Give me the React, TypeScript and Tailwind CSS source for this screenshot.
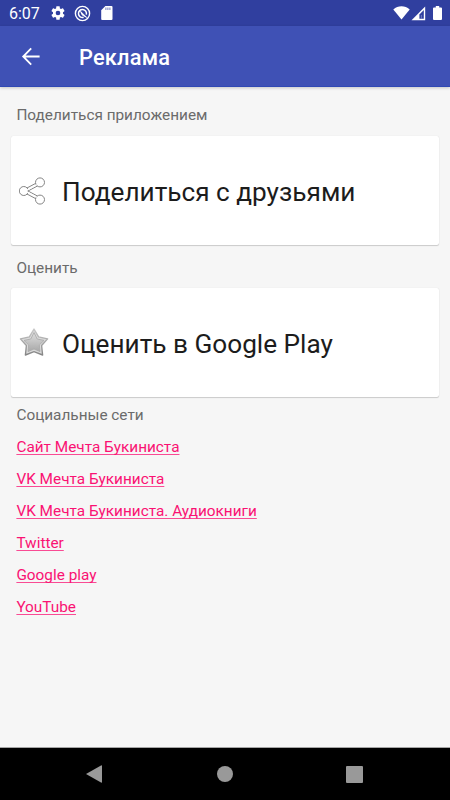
import React from "react";

const links = [
  "Сайт Мечта Букиниста",
  "VK Мечта Букиниста",
  "VK Мечта Букиниста. Аудиокниги",
  "Twitter",
  "Google play",
  "YouTube",
];

function StatusBar() {
  return (
    <div className="flex h-[26px] shrink-0 items-center justify-between bg-[#303f9f] pr-[8px] pl-[9px] text-white">
      <div className="flex items-center">
        <span className="w-[41px] pt-[1px] text-[16px] leading-[26px] whitespace-nowrap">6:07</span>
        <svg className="size-[16px]" viewBox="0 0 24 24" fill="currentColor">
          <path d="M19.43 12.98c.04-.32.07-.64.07-.98s-.03-.66-.07-.98l2.11-1.65c.19-.15.24-.42.12-.64l-2-3.46c-.12-.22-.39-.3-.61-.22l-2.49 1c-.52-.4-1.08-.73-1.69-.98l-.38-2.65A.488.488 0 0 0 14 2h-4c-.25 0-.46.18-.49.42l-.38 2.65c-.61.25-1.17.59-1.69.98l-2.49-1c-.23-.09-.49 0-.61.22l-2 3.46c-.13.22-.07.49.12.64l2.11 1.65c-.04.32-.07.65-.07.98s.03.66.07.98l-2.11 1.65c-.19.15-.24.42-.12.64l2 3.46c.12.22.39.3.61.22l2.49-1c.52.4 1.08.73 1.69.98l.38 2.65c.03.24.24.42.49.42h4c.25 0 .46-.18.49-.42l.38-2.65c.61-.25 1.17-.59 1.69-.98l2.49 1c.23.09.49 0 .61-.22l2-3.46c.12-.22.07-.49-.12-.64l-2.11-1.65zM12 15.5a3.5 3.5 0 1 1 0-7 3.5 3.5 0 0 1 0 7z" />
        </svg>
        <svg className="ml-[8px] size-[17px]" viewBox="0 0 17 17" fill="none" stroke="currentColor">
          <circle cx="8.5" cy="8.5" r="7.1" strokeWidth="1.4" />
          <path d="M9.6 12.3A4 4 0 1 1 12.3 9.6" strokeWidth="1.5" />
          <path d="M6.6 6.4 12.6 12.4 8 9.8Z" fill="currentColor" strokeWidth=".9" strokeLinejoin="round" />
        </svg>
        <svg className="ml-[10px] h-[14px] w-[12px]" viewBox="0 0 12 14">
          <path d="M4.4 0H10.5A1 1 0 0 1 11.5 1V13A1 1 0 0 1 10.5 14H1.2A1 1 0 0 1 .2 13V4.3Z" fill="#fff" />
          <path d="M4.9 1.6V4M6.9 1.6V4M8.9 1.6V4" stroke="#7c86c4" strokeWidth="1.1" />
        </svg>
      </div>
      <div className="flex items-center">
        <svg className="h-[14px] w-[17px]" viewBox="0 0 17 14" fill="#fff">
          <path d="M.3 3.4C5-.9 12-.9 16.7 3.4L8.5 13.6Z" />
        </svg>
        <svg className="ml-[1px] h-[15px] w-[15px]" viewBox="0 0 15 15">
          <path d="M.5 14.3 14.2.6V14.3Z" fill="#fff" />
          <path d="M8.4 8.4 12.8 4V12.8H8.4Z" fill="#303f9f" />
          <path d="M10.4 9V12.8" stroke="#7f89c6" strokeWidth=".8" />
        </svg>
        <svg className="ml-[7px] h-[14px] w-[9px]" viewBox="0 0 9 14" fill="#fff">
          <path d="M2.8 0H6.2V1.4H8Q9 1.4 9 2.4V13Q9 14 8 14H1Q0 14 0 13V2.4Q0 1.4 1 1.4H2.8Z" />
        </svg>
      </div>
    </div>
  );
}

function ShareIcon() {
  return (
    <svg className="h-[28px] w-[28px]" viewBox="0 0 28 28" fill="#fff" stroke="#858585" strokeWidth="1">
      <path d="M7.6 11.2 17 6.2M8.6 14.2 18.4 9M7.6 16.8 17 21.8M8.6 13.8 18.4 19" />
      <circle cx="4.8" cy="14" r="4.5" />
      <circle cx="21" cy="5.4" r="4.5" />
      <circle cx="21" cy="22.6" r="4.5" />
      <path d="M7.6 12.6 18.4 6.9 18.9 7.8 8.6 13.4ZM7.6 15.4 18.4 21.1 18.9 20.2 8.6 14.6Z" stroke="none" />
    </svg>
  );
}

function StarIcon() {
  return (
    <svg className="mb-[2px] h-[30px] w-[30px]" viewBox="0 0 30 30" strokeLinejoin="round">
      <defs>
        <linearGradient id="rim" x1="0" y1="0" x2="0" y2="1">
          <stop offset="0" stopColor="#c9c9c9" />
          <stop offset="1" stopColor="#858585" />
        </linearGradient>
        <linearGradient id="face" x1="0" y1="0" x2="0" y2="1">
          <stop offset="0" stopColor="#dedede" />
          <stop offset="1" stopColor="#a8a8a8" />
        </linearGradient>
      </defs>
      <path d="M15 2 19.6 9.9 28.6 11.9 22.6 18.5 23.6 28 15 24.6 6.4 28 7.4 18.5 1.4 11.9 10.4 9.9Z" fill="#dadada" stroke="url(#rim)" strokeWidth="1.4" />
      <path d="M15 5.6 18.2 12 25 13.4 20.3 18 21 24.6 15 22 9 24.6 9.7 18 5 13.4 11.8 12Z" fill="url(#face)" stroke="#a8a8a8" strokeWidth=".8" />
    </svg>
  );
}

function ActionCard({ icon, children }: { icon: React.ReactNode; children: React.ReactNode }) {
  return (
    <div className="mx-[11px] flex h-[109px] shrink-0 items-center rounded-[2px] bg-white pl-[8px] shadow-[0_1px_1px_rgba(0,0,0,0.17),0_0_1px_rgba(0,0,0,0.14)]">
      <div className="w-[43px]">{icon}</div>
      <span className="pt-[2px] text-[26.2px] leading-[32px] whitespace-nowrap text-[#1c1c1c]">{children}</span>
    </div>
  );
}

function SectionLabel({ children }: { children: React.ReactNode }) {
  return <div className="h-[32px] shrink-0 px-[16.4px] text-[15.35px] leading-[32px] text-[#6b6b6b]">{children}</div>;
}

export default function App() {
  return (
    <div className="flex h-[800px] w-[450px] flex-col overflow-hidden bg-[#f6f6f6] font-[Roboto,sans-serif]">
      <StatusBar />
      <header className="z-10 flex h-[61px] shrink-0 items-center border-b border-[#3049b4] bg-[#3f51b5] pl-[21px] text-white shadow-[0_1px_3px_rgba(0,0,0,0.2)]">
        <svg className="h-[20px] w-[20px]" viewBox="0 0 20 20" fill="none" stroke="currentColor" strokeWidth="1.8">
          <path d="M18.6 10.5H2.5M10.2 2.3 2.2 10.5l8 8.2" />
        </svg>
        <h1 className="ml-[38px] pt-[4px] text-[21.8px] font-medium tracking-[0.2px]">Реклама</h1>
      </header>
      <main className="flex flex-1 flex-col pt-[12px]">
        <SectionLabel>Поделиться приложением</SectionLabel>
        <div className="h-[5px]" />
        <ActionCard icon={<ShareIcon />}>Поделиться с друзьями</ActionCard>
        <div className="h-[7px]" />
        <SectionLabel>Оценить</SectionLabel>
        <div className="h-[4.4px]" />
        <ActionCard icon={<StarIcon />}>Оценить в Google Play</ActionCard>
        <div className="h-[1.6px]" />
        <SectionLabel>Социальные сети</SectionLabel>
        <nav className="flex flex-col items-start px-[16.4px]">
          {links.map((name) => (
            <a key={name} href="#" className="h-[32px] text-[15.35px] leading-[32px] whitespace-nowrap text-[#fa1273] underline decoration-[#fa1273]/75 decoration-1 underline-offset-2 [text-decoration-skip-ink:none]">
              {name}
            </a>
          ))}
        </nav>
      </main>
      <footer className="flex h-[53px] shrink-0 items-center justify-between border-t border-[#a5a5a5] bg-black pr-[87px] pl-[86px]">
        <svg className="h-[18px] w-[16px]" viewBox="0 0 16 18" fill="#999">
          <path d="M0 9 15 .4Q16 0 16 1V17Q16 18 15 17.6Z" />
        </svg>
        <div className="ml-[2px] size-[16px] rounded-full bg-[#999]" />
        <div className="size-[17px] rounded-[1px] bg-[#999]" />
      </footer>
    </div>
  );
}
